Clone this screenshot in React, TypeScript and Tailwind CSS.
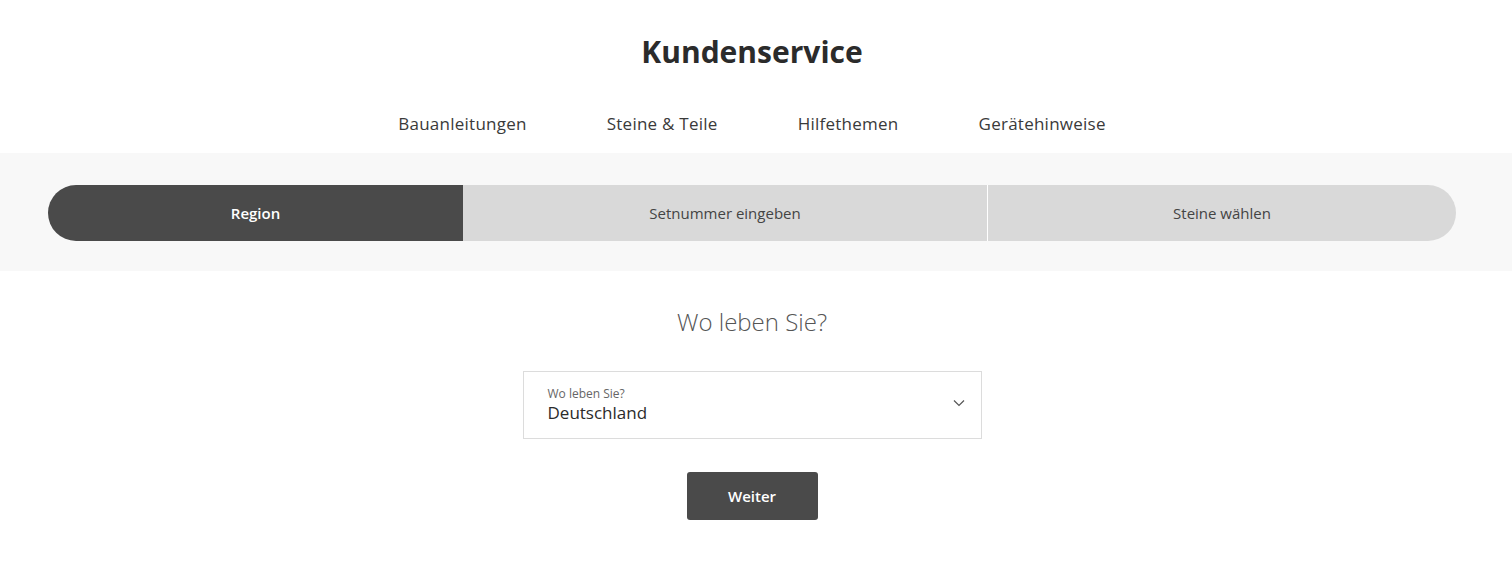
import React from "react";

const navItems = ["Bauanleitungen", "Steine & Teile", "Hilfethemen", "Gerätehinweise"];

const Chevron = () => (
  <svg width="14" height="14" viewBox="0 0 14 14" fill="none" stroke="#555" strokeWidth="1.2">
    <path d="M2 4.5 L7 9.5 L12 4.5" />
  </svg>
);

export default function App() {
  return (
    <div className="min-h-screen bg-white text-[#333]" style={{ fontFamily: "'Open Sans', 'Noto Sans', sans-serif" }}>
      <div className="pr-[8px]">
        <h1 className="pt-[32px] text-center text-[30px] font-bold leading-[40px] text-[#2b2b2b]">
          Kundenservice
        </h1>
        <nav className="mt-[38px] flex justify-center gap-[80px] text-[17px] leading-[28px] tracking-[0.25px] text-[#3a3a3a]">
          {navItems.map((item) => (
            <span key={item}>{item}</span>
          ))}
        </nav>
      </div>

      <div className="mt-[15px] bg-[#f8f8f8] pb-[30px] pl-[48px] pr-[56px] pt-[32px]">
        <div className="flex h-[56px] overflow-hidden rounded-full text-[15px]">
          <div className="flex w-[415px] items-center justify-center bg-[#4a4a4a] font-semibold text-white">
            Region
          </div>
          <div className="flex w-[525px] items-center justify-center border-r border-white bg-[#d9d9d9] text-[#444]">
            Setnummer eingeben
          </div>
          <div className="flex flex-1 items-center justify-center bg-[#d9d9d9] text-[#444]">
            Steine wählen
          </div>
        </div>
      </div>

      <div className="flex flex-col items-center pr-[8px]">
        <h2 className="mt-[36px] text-[24px] font-light leading-[30px] text-[#555]">Wo leben Sie?</h2>
        <div className="mt-[34px] flex h-[68px] w-[459px] items-center justify-between border border-[#dcdcdc] pl-[24px] pr-[15px]">
          <div className="flex flex-col">
            <span className="text-[12px] leading-[15px] text-[#666]">Wo leben Sie?</span>
            <span className="text-[17px] leading-[23px] text-[#2b2b2b]">Deutschland</span>
          </div>
          <div className="-mt-[5px]">
            <Chevron />
          </div>
        </div>
        <button className="mt-[33px] h-[48px] w-[131px] rounded-[3px] bg-[#4a4a4a] text-[15px] font-semibold text-white">
          Weiter
        </button>
      </div>
    </div>
  );
}
